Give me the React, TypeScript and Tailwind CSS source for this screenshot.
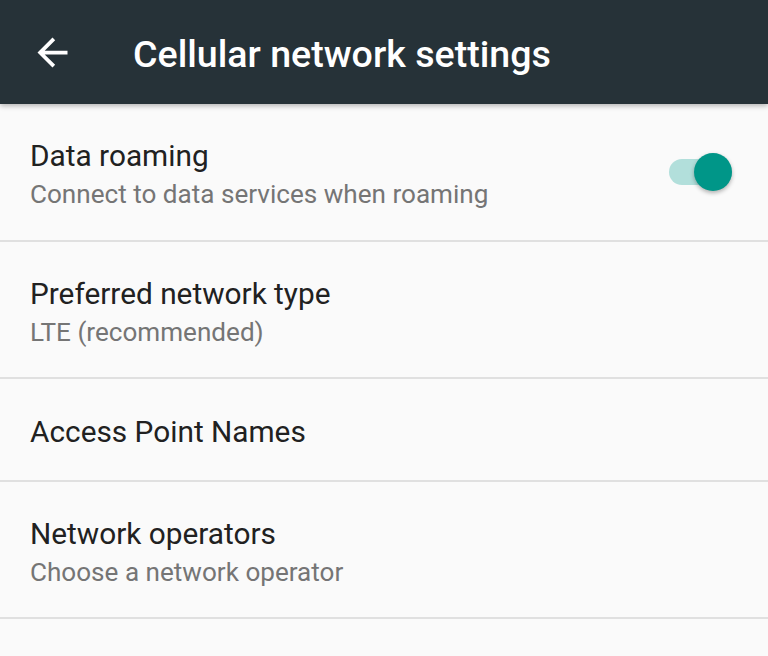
import React from "react"

const font = { fontFamily: "Roboto, 'Noto Sans', sans-serif" }

type Row = {
  title: string
  subtitle?: string
  toggle?: boolean
}

const rows: Row[] = [
  { title: "Data roaming", subtitle: "Connect to data services when roaming", toggle: true },
  { title: "Preferred network type", subtitle: "LTE (recommended)" },
  { title: "Access Point Names" },
  { title: "Network operators", subtitle: "Choose a network operator" },
]

function Toggle() {
  return (
    <div className="relative w-[63px] h-[38px]">
      <div className="absolute left-0 right-0 top-[6px] h-[26px] rounded-full bg-[#b2dfdb]" />
      <div className="absolute right-0 top-0 w-[38px] h-[38px] rounded-full bg-[#009688] shadow-[0_2px_4px_rgba(0,0,0,0.3)]" />
    </div>
  )
}

export default function App() {
  return (
    <div className="min-h-[656px] bg-[#fafafa]" style={font}>
      {/* App bar */}
      <header className="relative z-10 h-[104px] bg-[#263238] flex items-center pl-[30px] shadow-[0_2px_5px_rgba(0,0,0,0.28)]">
        <svg viewBox="0 0 24 24" className="w-[45px] h-[45px] fill-white">
          <path d="M20 11H7.83l5.59-5.59L12 4l-8 8 8 8 1.41-1.41L7.83 13H20v-2z" />
        </svg>
        <span className="ml-[58px] pt-[4px] text-[37.6px] leading-[44px] font-medium text-white">
          Cellular network settings
        </span>
      </header>

      {/* Settings list */}
      <div>
        {rows.map((row, i) => (
          <div
            key={row.title}
            className={`flex justify-between border-b-2 border-[#e0e0e0] px-[30px] ${
              row.subtitle ? (i === 0 ? "h-[138px] pt-[33px]" : "h-[137px] pt-[33px]") : "h-[103px] pt-[34px]"
            }`}
          >
            <div className="flex flex-col">
              <span className="text-[29.8px] leading-[38px] text-[#212121]">{row.title}</span>
              {row.subtitle && (
                <span className="text-[26.1px] leading-[38px] text-[#757575]">{row.subtitle}</span>
              )}
            </div>
            {row.toggle && (
              <div className="self-start mt-[16px] mr-[6px]">
                <Toggle />
              </div>
            )}
          </div>
        ))}
      </div>
    </div>
  )
}
